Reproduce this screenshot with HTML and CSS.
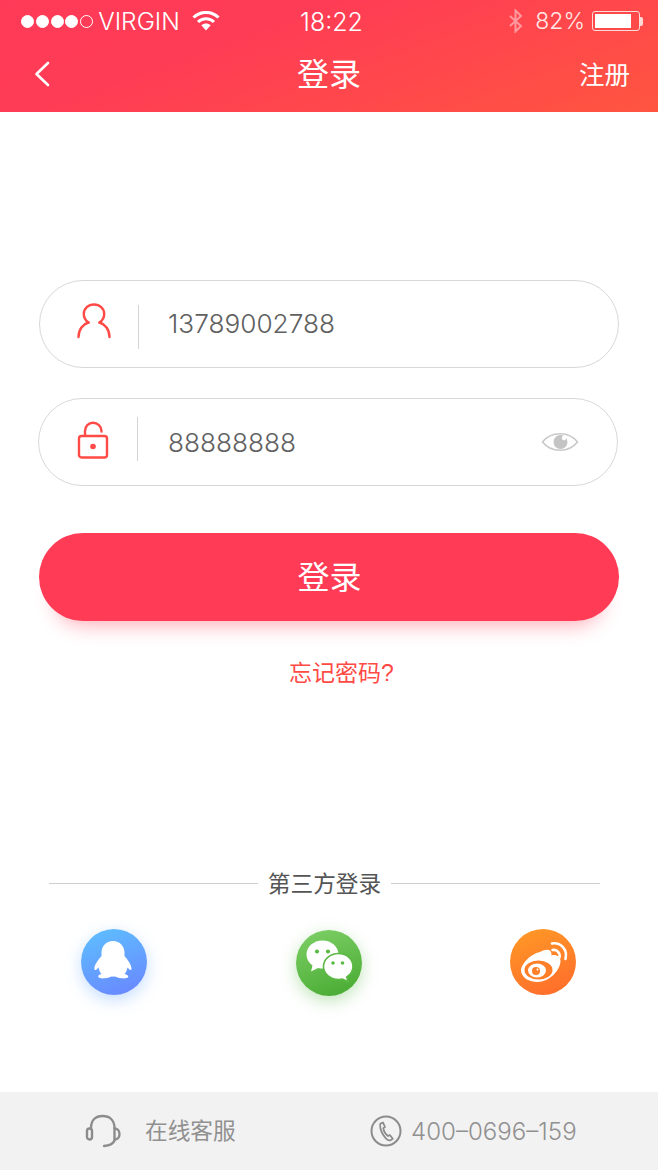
FILE: index.html
```html
<!DOCTYPE html>
<html lang="zh-CN">
<head>
<meta charset="utf-8">
<title>登录</title>
<link rel="stylesheet" href="styles.css">
</head>
<body>
<div class="page">
  <header class="header">
    <div class="status">
      <div class="status-left">
        <div class="dots"><i class="dot"></i><i class="dot"></i><i class="dot"></i><i class="dot"></i><i class="dot dot-empty"></i></div>
        <span class="carrier">VIRGIN</span>
        <svg class="wifi" width="28" height="20" viewBox="0 0 28 20"><path d="M1.500 6.500C8.500-.3 19.500-.3 26.500 6.500" class="wifi-arc"/><path d="M6 11C10.500 6.700 17.500 6.700 22 11" class="wifi-arc"/><path d="M9.300 14.300L14 19.500L18.700 14.300C15.800 11.800 12.200 11.800 9.300 14.300Z" fill="#fff"/></svg>
      </div>
      <span class="time">18:22</span>
      <div class="status-right">
        <svg class="bt" width="16" height="24" viewBox="0 0 16 24"><path d="M2 7L13 17L7.500 22.500V1.500L13 7L2 17" fill="none" stroke="#fff" stroke-width="2"/></svg>
        <span class="battery-pct">82%</span>
        <div class="battery"><div class="battery-level"></div></div>
        <i class="battery-nub"></i>
      </div>
    </div>
    <nav class="nav">
      <svg class="back" width="16" height="26" viewBox="0 0 16 26"><path d="M14 2L2.500 13L14 24" fill="none" stroke="#fff" stroke-width="2.600" stroke-linecap="round" stroke-linejoin="round"/></svg>
      <h1 class="nav-title">登录</h1>
      <a class="nav-action">注册</a>
    </nav>
  </header>

  <main class="main">
    <div class="field field-user">
      <div class="field-icon">
        <svg width="34" height="36" viewBox="0 0 34 36"><g fill="none" stroke="#ff4a45" stroke-width="2.400" stroke-linecap="round"><path d="M11.500 19.500C8.500 17.500 6.800 14.500 6.800 11C6.800 5.500 11.300 1.500 17 1.500S27.200 5.500 27.200 11C27.200 14.500 25.500 17.500 22.500 19.500"/><path d="M1.500 34C1.500 26.500 6 21 11.500 19.500M32.500 34C32.500 26.500 28 21 22.500 19.500"/></g></svg>
      </div>
      <span class="divider"></span>
      <span class="field-value">13789002788</span>
    </div>

    <div class="field field-pass">
      <div class="field-icon">
        <svg width="32" height="38" viewBox="0 0 32 38"><g fill="none" stroke="#ff4a45" stroke-width="2.400" stroke-linecap="round" stroke-linejoin="round"><rect x="2" y="15" width="28" height="21.500" rx="2.500"/><path d="M8 14.500V10C8 5 11.500 1.800 16 1.800S24.500 5 24.500 10V10.500"/></g><circle cx="16" cy="25.500" r="2.800" fill="#ff4a45"/></svg>
      </div>
      <span class="divider"></span>
      <span class="field-value">88888888</span>
      <svg class="eye" width="38" height="24" viewBox="0 0 38 24"><path d="M1.500 12C10 1 28 1 36.500 12C28 23 10 23 1.500 12Z" fill="none" stroke="#c9c9c9" stroke-width="1.600"/><circle cx="19.500" cy="12" r="7" fill="#c4c4c4"/><circle cx="23" cy="8" r="2.200" fill="#fff"/></svg>
    </div>

    <button class="submit">登录</button>
    <a class="forgot">忘记密码?</a>

    <div class="third-title">
      <span class="third-line"></span>
      <span class="third-text">第三方登录</span>
      <span class="third-line"></span>
    </div>

    <div class="socials">
      <div class="social social-qq">
        <svg width="66" height="66" viewBox="0 0 66 66"><path fill="#fff" d="M32 12C25 12 20.500 17 20.500 24V27C17.500 30.500 13.500 35.500 13.300 39.500C13.300 41 14.500 41.500 15.500 40.500L17.500 38.500C18 41 19 43.500 20.500 45C18 45.500 16.500 47 17.500 48.300C18.500 49.500 21 49.500 24 49.300C27 49.100 29 48.300 30.500 47.600C31.500 47.800 33 47.800 34 47.600C35.500 48.300 37.500 49.100 40.500 49.300C43.500 49.500 46 49.500 47 48.300C48 47 46 45.500 43.500 45C45 43.500 46 41 46.500 38.500L48.500 40.500C49.500 41.500 50.500 41 50.500 39.500C50.300 35.500 46.500 30.500 43.500 27V24C43.500 17 39 12 32 12Z"/></svg>
      </div>
      <div class="social social-wx">
        <svg width="66" height="66" viewBox="0 0 66 66"><path fill="#fff" d="M26.500 10.500C17.500 10.500 10.500 16.800 10.500 24.500C10.500 29 12.800 32.800 16.500 35.400L15 41.500L22 37.900C23.400 38.300 25 38.500 26.500 38.500C35.500 38.500 42.500 32.200 42.500 24.500C42.500 16.800 35.500 10.500 26.500 10.500Z"/><path fill="#fff" stroke="#5cb944" stroke-width="1.600" d="M42.500 23.500C34 23.500 27.500 29.400 27.500 36.500C27.500 43.600 34 49.500 42.500 49.500C43.900 49.500 45.300 49.300 46.500 49L52 51.800L50.800 47C54.600 44.500 57 40.800 57 36.500C57 29.400 51 23.500 42.500 23.500Z"/><g fill="#5cb944"><circle cx="21" cy="21.500" r="2.100"/><circle cx="32" cy="21.500" r="2.100"/><circle cx="37" cy="33" r="1.800"/><circle cx="46.500" cy="33" r="1.800"/></g></svg>
      </div>
      <div class="social social-wb">
        <svg width="66" height="66" viewBox="0 0 66 66"><path fill="#fff" d="M30 23C37 19 42 20 41.500 26.500C46 25 50.500 27.500 50.500 32C50.500 41 39.500 53 27.500 53C18 53 11 48 11 41C11 35.500 20 25 30 23Z"/><ellipse cx="28.500" cy="41" rx="14" ry="9.500" fill="#ff7e28"/><ellipse cx="27" cy="41.500" rx="9" ry="7" fill="#fff"/><circle cx="26" cy="42" r="4" fill="#ff7e28"/><circle cx="27.500" cy="40.500" r="1" fill="#fff"/><g fill="none" stroke="#fff" stroke-width="2.600" stroke-linecap="round"><path d="M42 14.500C50 13 58 20 55.500 30"/><path d="M42.500 21C46.500 20 50.500 24 49.500 28.500"/></g></svg>
      </div>
    </div>

    <footer class="footer">
      <div class="footer-item footer-service">
        <svg width="36" height="34" viewBox="0 0 36 34"><g fill="none" stroke="#8c8c8c" stroke-width="2.400" stroke-linecap="round"><path d="M6 14C6 6 10.500 2 17.500 2S29.500 6 29.500 14"/><path d="M29.500 26.500C28.500 29.500 25 31.500 19 32"/><rect x="2" y="14.500" width="5" height="11" rx="2.500"/><path d="M29.500 14.500C32.500 14.500 34.500 17 34.500 20S32.500 25.500 29.500 25.500Z"/></g></svg>
        <span>在线客服</span>
      </div>
      <div class="footer-item footer-phone">
        <svg width="32" height="32" viewBox="0 0 32 32"><circle cx="16" cy="16" r="14.500" fill="none" stroke="#8c8c8c" stroke-width="2"/><path d="M10.500 8.500L13 7.500L15 12L13.300 13.200C13.700 16 15.600 19.300 18 21L19.800 20L22.800 23.800L20.500 25.300C18.500 26 15.500 23.500 13 19.500C10.500 15.500 9.500 10.500 10.500 8.500Z" fill="none" stroke="#8c8c8c" stroke-width="1.800" stroke-linejoin="round"/></svg>
        <span class="phone-number">400–0696–159</span>
      </div>
    </footer>
  </main>
</div>
</body>
</html>
```

FILE: styles.css
```css
* { box-sizing: border-box; }
html, body { margin: 0; padding: 0; background: #fff; }
body {
  font-family: "Liberation Sans", "Noto Sans CJK SC", sans-serif;
  color: #666;
}
.page {
  width: 658px;
  height: 1170px;
  display: flex;
  flex-direction: column;
  overflow: hidden;
}
.header {
  height: 112px;
  flex: none;
  color: #fff;
  background: linear-gradient(160deg, #ff3a58 0%, #ff3c55 35%, #ff5540 100%);
}
.status {
  height: 40px;
  display: grid;
  grid-template-columns: 1fr auto 1fr;
  align-items: center;
  padding: 0 15px 0 21px;
}
.status-left, .status-right { display: flex; align-items: center; }
.status-right { justify-content: flex-end; }
.dots { display: flex; gap: 1.800px; }
.dot {
  width: 13px;
  height: 13px;
  border-radius: 50%;
  background: #fff;
  border: 1px solid #fff;
}
.dot-empty { background: transparent; }
.carrier {
  font-family: Inter, "Liberation Sans", sans-serif;
  font-weight: 300;
  font-size: 24.500px;
  margin-left: 5px;
  line-height: 40px;
}
.wifi { margin-left: 12px; }
.wifi-arc { fill: none; stroke: #fff; stroke-width: 3; }
.time {
  font-family: Inter, "Liberation Sans", sans-serif;
  font-weight: 300;
  font-size: 25px;
  line-height: 40px;
  padding-top: 2px;
  padding-right: 1px;
}
.bt { opacity: .45; }
.battery-pct {
  font-family: Inter, "Liberation Sans", sans-serif;
  font-weight: 300;
  font-size: 23px;
  margin-left: 11px;
  line-height: 40px;
  color: #ffe9e6;
}
.battery {
  width: 48px;
  height: 20px;
  margin-left: 7px;
  padding: 2px;
  border: 1px solid #ffd9d5;
  border-radius: 3px;
}
.battery-level { width: 36px; height: 100%; background: #fff; }
.battery-nub {
  width: 3px;
  height: 9px;
  background: #ffd9d5;
  border-radius: 0 2px 2px 0;
}
.nav {
  height: 72px;
  display: grid;
  grid-template-columns: 1fr auto 1fr;
  align-items: center;
  padding: 0 28px 0 34px;
}
.back { margin-top: -4px; }
.nav-title {
  margin: -2px 6px 0 0;
  font-size: 32px;
  font-weight: 400;
  line-height: 72px;
}
.nav-action { justify-self: end; font-size: 25.500px; line-height: 72px; margin-top: -2px; }

.main {
  flex: 1;
  display: flex;
  flex-direction: column;
}
.field {
  width: 580px;
  height: 88px;
  display: flex;
  align-items: center;
  border: 1.500px solid #d8d8d8;
  border-radius: 44px;
}
.field-user { margin: 168px 0 0 39px; }
.field-pass { margin: 30px 0 0 38px; }
.field-icon {
  width: 98px;
  display: flex;
  justify-content: center;
  padding-left: 10px;
}
.field-icon svg { display: block; margin-top: -7px; }
.field-pass .field-icon svg { margin-top: -4px; }
.divider { width: 1px; height: 44px; background: #d4d4d4; flex: none; }
.field-user .divider { margin-top: 6px; }
.field-pass .divider { margin-top: -6px; }
.field-value {
  flex: 1;
  padding-left: 29px;
  font-family: Inter, "Liberation Sans", sans-serif;
  font-weight: 300;
  font-size: 26.200px;
  color: #606060;
}
.field-user .field-value { margin-top: -2px; }
.field-pass .field-value { margin-top: 0; padding-left: 30px; }
.eye { margin-right: 38px; }
.submit {
  display: block;
  width: 580px;
  height: 88px;
  margin: 47px 0 0 39px;
  padding: 0 0 4px 1px;
  border: 0;
  border-radius: 44px;
  background: #ff3b55;
  color: #fff;
  font: inherit;
  font-size: 32px;
  box-shadow: 0 20px 20px -16px rgba(255, 59, 85, .42);
}
.forgot {
  display: block;
  margin: 36px 0 0 289px;
  font-size: 23px;
  line-height: 32px;
  color: #ff4a45;
}
.third-title {
  display: flex;
  align-items: center;
  gap: 10px;
  margin: 178px 58px 0 49px;
}
.third-line { flex: 1; height: 1px; background: #cfcfcf; }
.third-text { font-size: 22.700px; line-height: 32px; color: #555; padding-top: 1px; }
.socials {
  display: flex;
  justify-content: space-between;
  margin-top: 29px;
  padding: 0 82px 0 81px;
}
.social { width: 66px; height: 66px; border-radius: 50%; }
.social svg { display: block; }
.social-qq {
  background: linear-gradient(160deg, #5dc1ff, #6a84ff);
  box-shadow: 0 5px 16px rgba(90, 160, 255, .35);
}
.social-wx {
  margin-top: 1px;
  background: linear-gradient(160deg, #7fd068, #45a92f);
  box-shadow: 0 5px 16px rgba(80, 180, 60, .35);
}
.social-wb {
  background: linear-gradient(160deg, #ff9a26, #ff6a2c);
}
.footer {
  margin-top: auto;
  height: 78px;
  flex: none;
  display: flex;
  align-items: center;
  padding-left: 85px;
  background: #f2f2f2;
  color: #909090;
}
.footer-item { display: flex; align-items: center; }
.footer-service { width: 285px; gap: 24px; font-size: 22.700px; line-height: 32px; }
.footer-phone { gap: 9px; }
.phone-number {
  font-family: Inter, "Liberation Sans", sans-serif;
  font-weight: 300;
  font-size: 24.100px;
}
```
